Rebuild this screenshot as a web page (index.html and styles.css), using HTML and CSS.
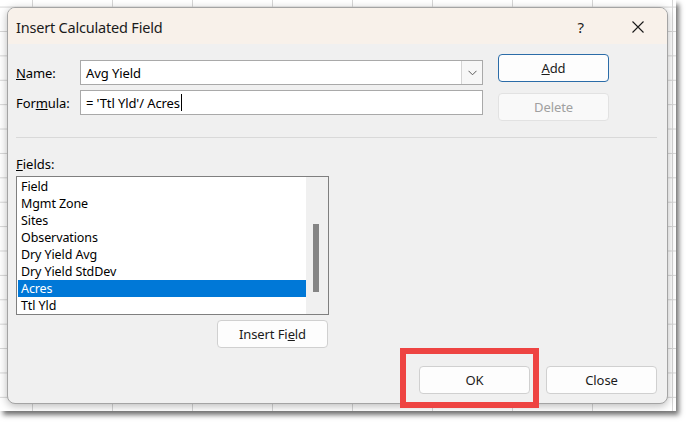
FILE: index.html
```html
<!DOCTYPE html>
<html>
<head>
<meta charset="utf-8">
<link rel="stylesheet" href="styles.css">
</head>
<body>
<div class="capture">
  <div class="dialog">
    <div class="titlebar">
      <span class="title">Insert Calculated Field</span>
      <span class="help">?</span>
      <svg class="close-x" width="12" height="12" viewBox="0 0 12 12"><path d="M0.5 0.5 L11.5 11.5 M11.5 0.5 L0.5 11.5" stroke="#1a1a1a" stroke-width="1.1" fill="none"/></svg>
    </div>
    <div class="body">
      <div class="top">
        <div class="form">
          <div class="row name-row">
            <label class="lbl"><u>N</u>ame:</label>
            <div class="input combo">
              <span class="val">Avg Yield</span>
              <span class="drop"><svg width="9" height="6" viewBox="0 0 9 6"><path d="M0.5 0.8 L4.5 4.8 L8.5 0.8" stroke="#5a5a5a" stroke-width="1" fill="none"/></svg></span>
            </div>
          </div>
          <div class="row formula-row">
            <label class="lbl">For<u>m</u>ula:</label>
            <div class="input"><span class="val">= 'Ttl Yld'/ Acres</span><span class="caret"></span></div>
          </div>
        </div>
        <div class="side-buttons">
          <button class="btn default"><u>A</u>dd</button>
          <button class="btn disabled">Delete</button>
        </div>
      </div>
      <div class="sep"></div>
      <div class="fields">
        <div class="fields-label"><u>F</u>ields:</div>
        <div class="listbox">
          <ul class="items">
            <li>Field</li>
            <li>Mgmt Zone</li>
            <li>Sites</li>
            <li>Observations</li>
            <li>Dry Yield Avg</li>
            <li>Dry Yield StdDev</li>
            <li class="sel">Acres</li>
            <li>Ttl Yld</li>
          </ul>
          <div class="scrollbar"><div class="thumb"></div></div>
        </div>
        <button class="btn insert">Insert Fi<u>e</u>ld</button>
      </div>
      <div class="footer">
        <button class="btn">OK</button>
        <button class="btn">Close</button>
      </div>
    </div>
  </div>
  <div class="highlight"></div>
</div>
</body>
</html>
```

FILE: styles.css
```css
* { box-sizing: border-box; }
html, body { margin: 0; padding: 0; background: #ffffff; }
body { width: 690px; height: 426px; overflow: hidden; font-family: "Noto Sans", "Open Sans", sans-serif; }

.capture {
  position: relative;
  width: 676px;
  height: 411px;
  padding: 7px 0 0 7px;
  background-color: #ffffff;
  background-image:
    linear-gradient(to right, #d6d6d6 1px, transparent 1px),
    linear-gradient(to bottom, #d6d6d6 1px, transparent 1px);
  background-size: 80px 100%, 100% 24.4px;
  background-position: 32px 0, 0 6.6px;
  box-shadow: 3px 4px 5px rgba(0,0,0,0.55);
}

.dialog {
  width: 661px;
  height: 397px;
  border: 1px solid #a4a4a4;
  border-radius: 8px;
  background: #f0f0f0;
  overflow: hidden;
  box-shadow: 0 2px 9px rgba(0,0,0,0.28);
  display: flex;
  flex-direction: column;
}

.titlebar {
  height: 36px;
  background: #f8f1ea;
  display: flex;
  align-items: center;
  padding: 0 23px 0 8px;
  flex: none;
}
.title { font-size: 14.5px; letter-spacing: -0.2px; color: #1b1b1b; flex: 1; padding-top: 2px; }
.help { font-size: 15px; color: #1b1b1b; margin-right: 48px; padding-top: 1px; }
.close-x { display: block; margin-top: 2px; }

.body { flex: 1; padding: 10px 10px 9px 8px; display: flex; flex-direction: column; }

.top { display: flex; }
.form { width: 467px; padding-top: 6px; display: flex; flex-direction: column; gap: 5px; }
.row { display: flex; align-items: center; }
.lbl { width: 64px; font-size: 13px; letter-spacing: -0.1px; color: #000; }
.input {
  width: 403px; height: 25px;
  background: #fff; border: 1px solid #a9a9a9;
  display: flex; align-items: center;
  padding-left: 5px;
  font-size: 13px; letter-spacing: -0.1px; color: #000;
  position: relative;
}
.combo .val { flex: 1; }
.drop {
  width: 21px; height: 23px;
  border-left: 1px solid #d4d4d4;
  background: #f7f7f7;
  display: flex; align-items: center; justify-content: center;
}
.caret { width: 1px; height: 17px; background: #000; margin-left: 1px; }

.side-buttons { margin-left: 15px; display: flex; flex-direction: column; gap: 11px; }

.btn {
  font-family: inherit;
  width: 111px; height: 28px;
  background: #fdfdfd;
  border: 1px solid #d0d0d0;
  border-radius: 4px;
  font-size: 13px;
  letter-spacing: -0.1px;
  color: #1b1b1b;
  padding: 0;
}
.btn.default { border-color: #2b6ca8; background: #fdfdfd; }
.btn.disabled { color: #a0a0a0; border-color: #e2e2e2; background: #f9f9f9; }

.sep { height: 1px; background: #d9d9d9; margin: 16px 0 0 0; }

.fields { display: flex; flex-direction: column; width: 313px; margin-top: 17px; }
.fields-label { font-size: 13px; color: #000; height: 21px; }
.listbox {
  height: 139px;
  border: 1px solid #7f7f7f;
  background: #fff;
  display: flex;
}
.items { list-style: none; margin: 0; padding: 1px 0 0 1px; flex: 1; }
.items li { height: 17px; line-height: 17px; padding-left: 3px; font-size: 12.5px; letter-spacing: -0.1px; color: #000; white-space: nowrap; }
.items li.sel { background: #0078d7; color: #fff; }
.scrollbar { width: 22px; background: #f0f0f0; padding: 47px 0 0 7px; }
.thumb { width: 6px; height: 68px; background: #858585; }

.btn.insert { align-self: flex-end; margin-top: 5px; margin-right: 1px; height: 28px; }

.footer { margin-top: auto; display: flex; justify-content: flex-end; gap: 16px; }

.highlight {
  position: absolute;
  left: 400px; top: 348px;
  width: 139px; height: 60px;
  border: 6px solid #ee4442;
}
```
